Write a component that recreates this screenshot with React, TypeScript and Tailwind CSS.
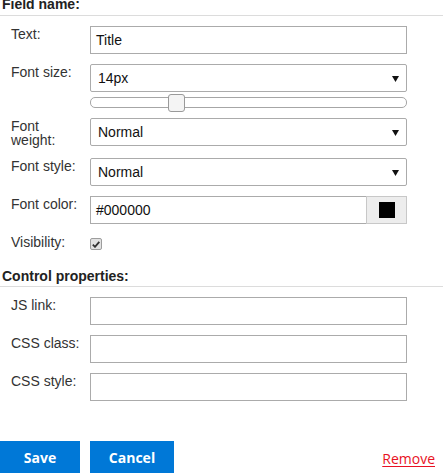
import React from "react";

const Arrow = () => (
  <svg className="absolute right-[7px] top-[11px]" width="7" height="6" viewBox="0 0 7 6">
    <path d="M0 0 H7 L3.5 6 Z" fill="#111" />
  </svg>
);

const Select = ({ value, className = "" }: { value: string; className?: string }) => (
  <div className={`relative w-[317px] h-[28px] border border-[#ababab] rounded-[2px] bg-white pl-[7px] text-[14px] leading-[26px] text-[#111] ${className}`}>
    {value}
    <Arrow />
  </div>
);

const Input = ({ value = "", className = "" }: { value?: string; className?: string }) => (
  <div className={`w-[317px] h-[28px] border border-[#ababab] bg-white pl-[5px] text-[14px] leading-[26px] text-[#111] ${className}`}>
    {value}
  </div>
);

const Label = ({ children }: { children: React.ReactNode }) => (
  <div className="w-[90px] shrink-0 pl-[11px] pt-[1px] text-[14px] leading-[14px] text-[#333]">{children}</div>
);

const Header = ({ children, className = "" }: { children: React.ReactNode; className?: string }) => (
  <div className={`h-[16px] border-b border-[#dcdcdc] pl-[2px] text-[14px] font-bold text-[#222] ${className}`}>
    {children}
  </div>
);

export default function App() {
  return (
    <div className="w-[443px] h-[473px] overflow-hidden bg-white" style={{ fontFamily: '"Liberation Sans", Arial, sans-serif' }}>
      <Header className="leading-[9px]">Field name:</Header>

      <div className="flex mt-[10px]">
        <Label>Text:</Label>
        <Input value="Title" />
      </div>

      <div className="flex mt-[10px]">
        <Label>Font size:</Label>
        <div className="flex flex-col">
          <Select value="14px" />
          <div className="relative mt-[5px] w-[317px] h-[11px] border border-[#a6a6a6] rounded-[5px] bg-white">
            <div className="absolute left-[77px] top-[-4px] w-[17px] h-[18px] border border-[#9a9a9a] rounded-[3px] bg-[#f4f4f4]" />
          </div>
        </div>
      </div>

      <div className="flex h-[28px] mt-[10px]">
        <Label>
          Font
          <br />
          weight:
        </Label>
        <Select value="Normal" />
      </div>

      <div className="flex h-[28px] mt-[12px]">
        <Label>Font style:</Label>
        <Select value="Normal" />
      </div>

      <div className="flex h-[28px] mt-[10px]">
        <Label>Font color:</Label>
        <div className="flex w-[317px] h-[28px]">
          <div className="flex-1 border border-[#ababab] border-r-0 pl-[5px] text-[14px] leading-[26px] text-[#111]">#000000</div>
          <div className="w-[41px] h-[28px] border border-[#c8c8c8] bg-[#ededed] flex items-center justify-center">
            <div className="w-[16px] h-[16px] bg-black" />
          </div>
        </div>
      </div>

      <div className="flex mt-[10px]">
        <Label>Visibility:</Label>
        <div className="mt-[4px] w-[12px] h-[12px] border border-[#9d9d9d] rounded-[2px] bg-[#e2e2e2] flex items-center justify-center">
          <svg width="8" height="7" viewBox="0 0 8 7">
            <path d="M0.8 3.6 L3 5.8 L7.3 0.8" stroke="#333" strokeWidth="1.8" fill="none" />
          </svg>
        </div>
      </div>

      <Header className="mt-[21px] leading-[11px]">Control properties:</Header>

      <div className="flex h-[28px] mt-[10px]">
        <Label>JS link:</Label>
        <Input />
      </div>
      <div className="flex h-[28px] mt-[10px]">
        <Label>CSS class:</Label>
        <Input />
      </div>
      <div className="flex h-[28px] mt-[10px]">
        <Label>CSS style:</Label>
        <Input />
      </div>

      <div className="flex items-center mt-[40px]" style={{ fontFamily: '"Open Sans", "Noto Sans", sans-serif' }}>
        <button className="w-[80px] h-[32px] bg-[#0078d7] text-white text-[14px] font-bold">Save</button>
        <button className="ml-[10px] w-[84px] h-[32px] bg-[#0078d7] text-white text-[14px] font-bold">Cancel</button>
        <a className="ml-auto mr-[8px] mt-[2px] text-[14px] text-[#e81123] underline decoration-[#e81123] underline-offset-[2px]">Remove</a>
      </div>
    </div>
  );
}
